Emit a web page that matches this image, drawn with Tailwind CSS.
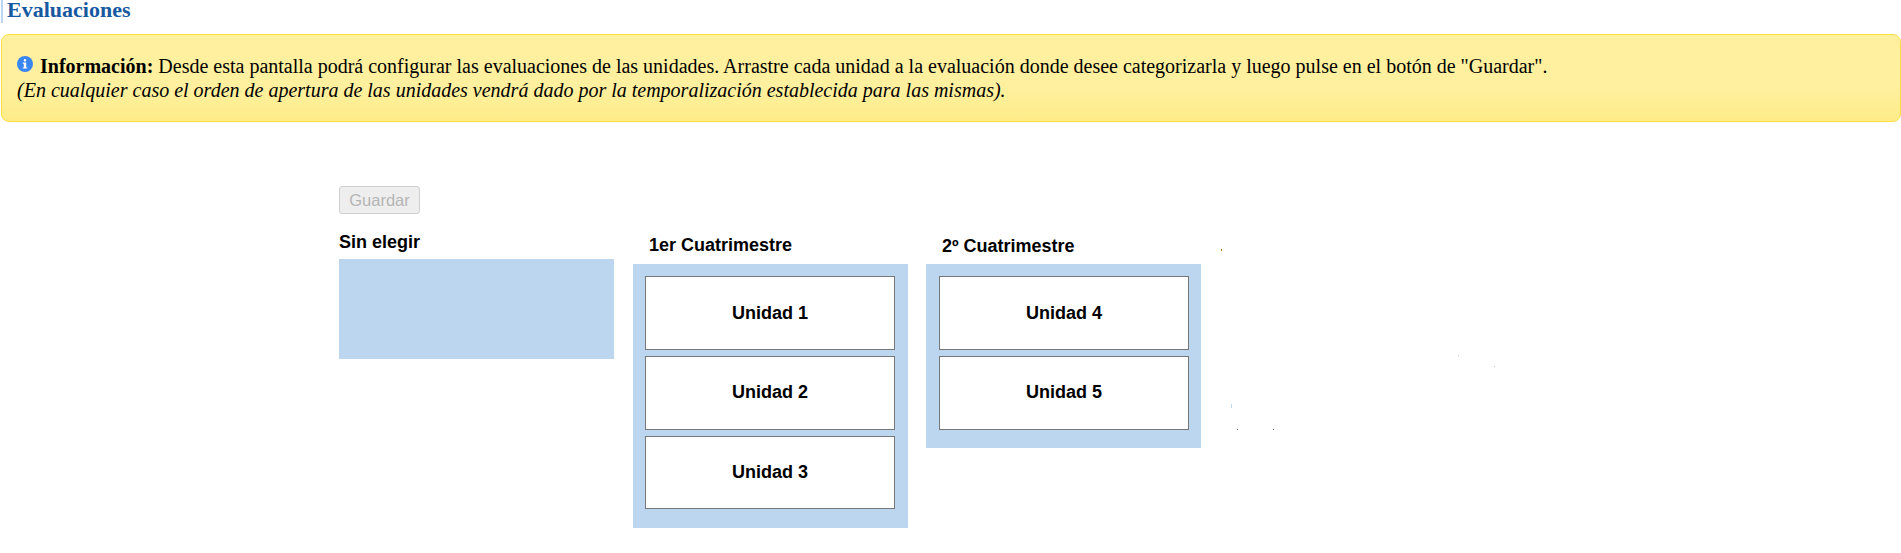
<!DOCTYPE html>
<html lang="es">
  <head>
    <meta charset="UTF-8" />
    <meta name="viewport" content="width=device-width, initial-scale=1.0" />
    <title>Evaluaciones</title>
    <script src="https://cdn.jsdelivr.net/npm/@tailwindcss/browser@4"></script>
  </head>
  <body class="relative bg-white text-black min-h-screen font-['Liberation_Sans',Arial,sans-serif] overflow-hidden">
    <h1 class="ml-px h-[23px] border-l-2 border-[#bcd7f0] pl-1 font-['Liberation_Serif',serif] text-[22px]/[20px] font-bold text-[#17599f]">
      Evaluaciones
    </h1>

    <!-- Aviso -->
    <div class="mt-[11px] ml-px h-[88px] rounded-lg border border-[#fbdf3f] bg-linear-to-b from-[#fef09f] from-60% to-[#feec88] pt-[19px] pl-[15px] font-['Liberation_Serif',serif] text-[20px]/[24px]">
      <p>
        <svg class="mr-[2px] inline-block align-[1px]" width="16" height="16" viewBox="0 0 16 16">
          <circle cx="8" cy="8" r="8" fill="#3a86f0" />
          <rect x="6.8" y="3" width="2.4" height="2.4" rx="1" fill="#fff" />
          <path d="M5.8 6.6h3.4v4.8h1v1.2H5.8v-1.2h1V7.8h-1z" fill="#fff" />
        </svg>
        <b>Información:</b> Desde esta pantalla podrá configurar las evaluaciones de las unidades. Arrastre cada unidad a la evaluación donde desee categorizarla y luego pulse en el botón de "Guardar".
      </p>
      <p class="italic">(En cualquier caso el orden de apertura de las unidades vendrá dado por la temporalización establecida para las mismas).</p>
    </div>

    <div class="mt-[64px] ml-[339px]">
      <button disabled class="h-[28px] w-[81px] rounded-[3px] border border-[#cfcfcf] bg-[#eeeeee] text-[16.5px] text-[#b5b5b5]">
        Guardar
      </button>

      <div class="mt-[13px] flex items-start gap-[19px]">
        <div class="w-[275px]">
          <h2 class="h-[32px] pt-[5px] text-lg/[20px] font-bold">Sin elegir</h2>
          <div class="h-[100px] bg-[#bbd6ee]"></div>
        </div>

        <div class="w-[275px]">
          <h2 class="h-[37px] pl-4 pt-2 text-lg/[20px] font-bold">1er Cuatrimestre</h2>
          <div class="flex flex-col gap-[6px] bg-[#bbd6ee] pl-3 pr-[13px] pt-3 pb-[19px]">
            <div class="flex h-[74px] items-center justify-center border border-[#777777] bg-white text-lg font-bold">Unidad 1</div>
            <div class="flex h-[74px] items-center justify-center border border-[#777777] bg-white pb-[2px] text-lg font-bold">Unidad 2</div>
            <div class="flex h-[73px] items-center justify-center border border-[#777777] bg-white pb-[2px] text-lg font-bold">Unidad 3</div>
          </div>
        </div>

        <div class="-ml-px w-[275px]">
          <h2 class="h-[37px] pl-4 pt-[9px] text-lg/[20px] font-bold">2º Cuatrimestre</h2>
          <div class="flex flex-col gap-[6px] bg-[#bbd6ee] pl-[13px] pr-3 pt-3 pb-[18px]">
            <div class="flex h-[74px] items-center justify-center border border-[#777777] bg-white text-lg font-bold">Unidad 4</div>
            <div class="flex h-[74px] items-center justify-center border border-[#777777] bg-white pb-[2px] text-lg font-bold">Unidad 5</div>
          </div>
        </div>
      </div>
    </div>

    <!-- restos sueltos de la captura -->
    <span class="absolute left-[1221px] top-[249px] h-[2px] w-px bg-[#b8721a]"></span>
    <span class="absolute left-[1231px] top-[404px] h-[4px] w-px bg-[#bcd7f0]"></span>
    <span class="absolute left-[1237px] top-[429px] h-px w-px bg-[#777777]"></span>
    <span class="absolute left-[1273px] top-[429px] h-px w-px bg-[#777777]"></span>
    <span class="absolute left-[1458px] top-[355px] h-px w-px bg-[#b0c8e0]"></span>
    <span class="absolute left-[1494px] top-[366px] h-px w-px bg-[#b0c8e0]"></span>
  </body>
</html>
